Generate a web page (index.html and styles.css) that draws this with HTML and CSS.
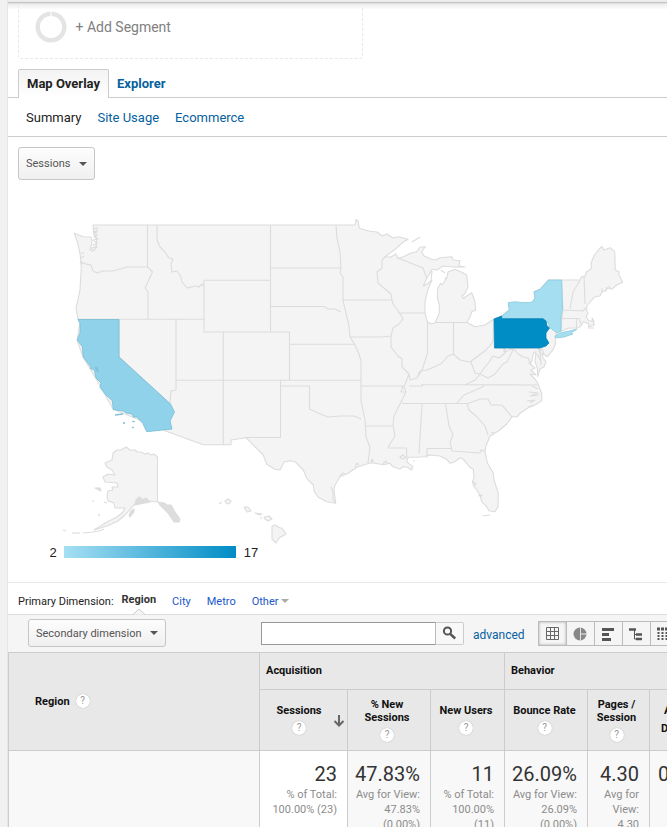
FILE: index.html
```html
<!DOCTYPE html>
<html lang="en">
<head>
<meta charset="utf-8">
<title>Map Overlay</title>
<link rel="stylesheet" href="styles.css">
</head>
<body>
<main class="report">
  <div class="topbar"></div>
  <section class="segment">
    <svg class="ring" width="32" height="32" viewBox="0 0 32 32"><circle cx="16" cy="16" r="13.3" fill="none" stroke="#e4e4e4" stroke-width="4.4"/><path d="M16 0v6" stroke="#fff"/></svg>
    <span>+ Add Segment</span>
  </section>
  <nav class="tabs"><a class="tab active">Map Overlay</a><a class="tab">Explorer</a></nav>
  <nav class="subtabs"><a class="current">Summary</a><a>Site Usage</a><a>Ecommerce</a></nav>
  <div class="metric"><button class="drop">Sessions<i class="caret"></i></button></div>
  <section class="map">
    <svg width="659" height="360" viewBox="8 190 659 360">
      <g fill="#f4f4f4" stroke="#dcdcdc" stroke-width="1.1" stroke-linejoin="round">
        <path d="M93 225H355L356 219.500 358 220.500 359.300 228.300 365 230 370 231.300 377 232 382 236 387 234 393 238 398 236.700 408 239.300 402 243 395 249.300 385 256.700 391 257 396 254 398 258.500 405 256 411 253 416.700 251.700 420 247.300 425.300 246.700 421.700 251.700 424 256 431.700 259.300 436 260 440 257.700 451.700 256.700 453.300 260 460 260.700 459 266 465 267 455 267 443 266 437 270 432 269.300 429 275 426.700 278.300 423.300 286 427 284 432 280 428.300 288.300 425 301.700V313.300L427.300 321.700 431 324 435 322.700 439.300 313.300V305L437.300 297.300 437.700 288.300 440.700 283.300 442 285 446.700 278.300 448 272 455 269.300 462.700 272.700 466.700 275 468 286.700 465 293.300 462 296 463.300 298.500 466.700 296 471.700 292.700 475 301.700 475.700 310 471.700 311.700 470 317.300 466.700 322.300 475 326.700 485 325 494.300 318.700 501.700 316 509.300 310 508.300 302.700 523.300 302.700 531.700 302.300 535 298.300 534 291.700 540 289.300 548.300 280H579.700L581.700 276.700 585 276 586.700 271.700 591.700 268.300 591 263.300 594.300 255 601.700 246.300 604 250 610 247.700 614.700 251.700 615.300 270 619 271.700 619 275 622.700 282.300 616.700 285 611.700 289.300 608 288 605 291 602 292 600 296 595 296.700 591.700 300 586.700 306V311L588 313 586 317 589 321 594 321 592 318 594.300 325 588.300 327 589 324 583.300 321.700 581.700 325 578.300 327.700 568.300 328.300 560 331.700 556.700 332.700 555 337 555.700 343.300 553.300 349.300 547.300 356.700 542 353 543 358 546 361.700 544 366.700 540 369 537.700 376.700 537.300 368.300 535 361.700 536 351.700 533.300 353.300 531.700 361.700 529 363 535 368 531 370 536 375 530 374 535 379 537.700 383.300 541.700 393.300V400.700L535 405 528.300 407.700 520 413.300 517.300 416.700H512.300L506.700 424 498.300 431 490 436 485.700 446.700 485 451.700 487.300 462.700 493.300 473.300 494 480 498.300 493.300 498 506.700 495 511.700 489 510.700 486.700 506.700 481.700 501.700 480 495 474 486 472.300 481.700 474 478 473.300 469.300 470 467.300 463.300 459.300 460 457.700 455 461.700 450 463.300 446.700 459.300 440 456 430 455 423.300 456.700 416.700 457.300 408.300 457.300 406.700 461.700 412.700 466.700 411.700 470 407 467 403.300 466.700 400 469 392.700 466.700 390 463.300 383.300 464.700 371.700 462.700 366.700 464 356.700 467.300 348.300 473.300 340 476.700 335 485 334 490 335.700 503.300 326.700 501.700 318.300 497.300 314.300 491.700 313.300 485 306.700 478.300 303.300 470 295 461.700 290 460.700 284 462 280 470 275 469.300 266.700 464.300 263.300 455 246 437.700 231 440V444.700H203.300L168.300 432 113 409 95 377 83 357 77 340 80 323 78 319.300 76 308.300 80 290 81.300 266.700 80 253.300 77.300 241.700 74.300 233.300 83.300 236.700 91 237 92 242 90 250 93 251 96 248 97 238 94 235Z"/>
        <path fill="none" d="M147.500 225V267M81 262 86 264 91 265 93 271 97 273 103 271 113 271 127 267H147.500L152.500 272 145 288 148 292V319M78 319.300H204V280.300H270.500M157 225V240L160 247 164 251 169 258 173 259 171 264 172 272 177 271 181 277 182 282 187 288 195 286 199 287 202 284 204 287V332H270.500M270.500 225V332M119 319.300V357L170 404 171 391 176 390V319.300M223.300 332V444.700M176 380.300H361M336 225 337 238 340 252 341 268H270.500M341 268 340 273 343 277V300L345 309 349 326 350 337 355 345 359 354 361 361V401L365 420 366 437 370 447 368 463M343 300H392L393 304 401 315 403 319 399 324 393 328 391 336 381 337H350M270.500 306.500H324L328 309 335 309 341 312M270.500 332H289.500V380M289.500 344.300H355M385 257 382 260 382 268 377 272 378 283 391 294 392 300M398 258 423 268 427 279M398 313H425M427.500 322V353L425 361 422 370 417 378M391 336 391 347 398 356 402 359 402 367 409 374 410 380 417 378 420 371 427 370 434 367 442 363 448 356 453.500 354V322.500M435 322.500H467M453.500 354 460 360 470 362 478 356 486 350 493 342 494 319M505 347 505 353 499 358 493 356 489 362 485 367 480 374 475 373 471 362M480 374 475 380 465 385M480 374 488 378 495 374 503 364 507 362 513 350M505 352 511 349 515 350 518 354 523 357 528 358 532 366M494 348H540L541 365M504 348V352M538 348 541 356M541 348 544 353M422 384 422.500 386H409M422 384.500 537.500 385M402 403.500H468L480 399 488 399 491 405 502 405 512 417M457 403 464 395 478 389 484 386M409 374 404 387 406 392 400 404 394 416 393 425 395 436 390 444 388 448H406.500L407 458M280.500 380V437.500H246M280.500 386H309.500V409L318 413 328 417 340 416 354 416 361 419M361 386H403L401 392H405M366 426H393M422 404 419 454M445.500 404 449 426 453 435 450 442 451.500 448 452 451 480 453 481 450 485 451.500M427 458 427 448.500H451.500M467 404 469 410 476 416 485 426 488 435M561.500 280 563 309 562 318 561 331M563 310 583 311 586 308M561 318.500H579L581 324M576.500 319V328M570 309 573 292 579 282 580 280M584 276 585 304"/>
        <path d="M157.500 457 154 454 151 455 148 453 145 454 141 452 137 452 135 450 130 450 126 447 121 450 117 450 113 453 112 460 105 463 107 467 112 470 115 475 108 474 103 477 105 482 117 483 118 487 112 487 113 490 108 491 107 496 108 501 114 503 115 508 125 508 123 512 117 517 107 522 94 530 107 526 118 521 126 514 132 507 137 502 143 499 148 501 157.500 502Z"/>
        <path fill="#ddd" d="M158 502 164 503 167 505 171 505 175 512 180 519 179 522 174 522 168 513 160 505ZM136 500 139 497 141 498 140 501 146 498 150 502 140 504 135 505ZM129 515 131 511 134 509 134 512 130 517ZM95 488 100 488 101 491 97 489Z"/>
        <path d="M225 501 228 499 231 501 230 503 227 504ZM244 507 248 507 251 511 247 512ZM255 513 262 514 260 515ZM264 517 269 516 272 519 268 521 265 519ZM272 526 275 525 280 528 282 528 286 534 279 538 276 543 272 539Z"/>
        <path fill="none" d="M63 530l3 1M72 533l5 0 3 0M83 533l10-1M93 532l6-1 5-2M92 501l2 0M219 504l3-2M260 518l2 0M98 514l2 2M104 502l3 1M412 242l8-5M93 229l4-1 0 4-4-1 4 4-3 2 4 2-5 1 4 3-4 2 4 2-6 1 3 2M81 253l3 0M81 258l3-2M80 262l3 2M431 281l1-10M441 270l4 3M445 280l1-3M400 457l3-2 3 3-4 1ZM340 476l3-3 2 1M355 467l2-4 2 2M371 463l1-4 2 4M383 464l3-3 2 3M331 487l2 5 0 8 3 3M529 392l9 1-8 3 9-1M532 386l6 3M527 401l8-1-5 3M528 407l6-2M473 482l3 2-3 2M478 496l4-1-2 3M491 432l3 1M483 516l7-1M413 461h2M594 328l-6 0M537 354l4 7M602 292l0-4M606 291l1-4M610 289l-1-3"/>
      </g>
      <path fill="#90d2ea" stroke="#75bdd7" stroke-width=".8" d="M78 319.500H119V357L170.500 404 174.500 412 170 421 172 429 146.700 431.700 142.700 423.300 137 417 133.300 417 132 414 126 413 123.300 411 113.300 409.700 112.300 400.700 106 395 100 387.300 101 383 96 378 94.300 370 90.700 368.700 90.700 366.700 83.300 357.300 82.300 346.700 77.300 340 80 333 80 323Z"/>
      <path fill="none" stroke="#82bfd5" stroke-width="1.300" d="M115 415l8-1M123 423h2M132 421l3 1M132 427l2 1M95 367l3 5-1-5"/>
      <path fill="#a5def1" stroke="#8bcbe0" stroke-width=".8" d="M501.700 316 509.300 310 508.300 302.700 515 301.700 523.300 302.700 531.700 302.300 535 298.300 534 291.700 540 289.300 548.300 280H561.700L562.500 308 561 317V331L557 333 549 327 549 324 543 318.700H501.700ZM555 336 560 333 569 331 577 329 571 333 573 334 564 337 556 338Z"/>
      <path fill="#008cc5" stroke="#007eb5" stroke-width=".7" d="M494 319 501.700 316V318.700H543L546 321 547 326 549.500 328 546 333 546 338 549 343 546 346 540 348H494.500Z"/>
    </svg>
    <div class="legend"><span>2</span><i class="scale"></i><span>17</span></div>
  </section>
  <section class="dimensions">
    <span>Primary Dimension:</span><b>Region</b><a>City</a><a>Metro</a><a>Other<i class="caret soft"></i></a>
    <svg class="pointer" width="12" height="7" viewBox="0 0 12 7"><path d="M0 6.500 6 1l6 5.500" fill="#f5f5f5" stroke="#c8c8c8"/></svg>
  </section>
  <section class="toolbar">
    <button class="drop secondary">Secondary dimension<i class="caret"></i></button>
    <div class="search"></div>
    <button class="find"><svg width="15" height="15" viewBox="0 0 15 15" fill="none" stroke="#555"><circle cx="5.500" cy="5" r="3.600" stroke-width="2"/><path d="m8.200 7.800 5 4.700" stroke-width="2.500"/></svg></button>
    <a class="advanced">advanced</a>
    <div class="views">
      <span class="on"><svg width="14" height="14" viewBox="0 0 14 14"><path d="M.5.5h12v12H.5zM4.500.5v12M8.500.5v12M.5 4.500h12M.5 8.500h12" fill="none" stroke="#666"/></svg></span>
      <span><svg width="14" height="14" viewBox="0 0 14 14"><circle cx="7" cy="7" r="6.500" fill="#888"/><path d="M7.500 0v14" stroke="#e2e2e2"/><path d="M7.500 7H14" stroke="#eee"/></svg></span>
      <span><svg width="14" height="14" viewBox="0 0 14 14"><path d="M1 2.500h12M1 7.500h7M1 12.500h9" stroke="#555" stroke-width="3"/></svg></span>
      <span><svg width="14" height="14" viewBox="0 0 14 14"><path d="M0 2.500h7M7 7.500h6M7 12h6" stroke="#555" stroke-width="2.600"/><path d="M5.500 2.500v9.500H9M5.500 7.500H9" fill="none" stroke="#555"/></svg></span>
      <span><svg width="14" height="14" viewBox="0 0 14 14"><path d="M0 2h14" stroke="#555" stroke-width="3" stroke-dasharray="3 1"/><path d="M1.500 5v8M5.500 5v8M9.500 5v8" stroke="#555" stroke-width="2" stroke-dasharray="2 1"/></svg></span>
    </div>
  </section>
  <section class="table">
    <div class="region"><b>Region</b><i class="help">?</i></div>
    <div class="group acquisition">Acquisition</div>
    <div class="group behavior">Behavior</div>
    <div class="head">Sessions<i class="help">?</i><svg class="sort" width="12" height="14" viewBox="0 0 12 14"><path d="M6 1v10M1.500 7 6 11.500 10.500 7" fill="none" stroke="#666" stroke-width="2"/></svg></div>
    <div class="head two">% New<br>Sessions<i class="help">?</i></div>
    <div class="head">New Users<i class="help">?</i></div>
    <div class="head">Bounce Rate<i class="help">?</i></div>
    <div class="head two">Pages /<br>Session<i class="help">?</i></div>
    <div class="head edge"><span>Avg.</span><span>Duration</span></div>
    <div class="cell blank"></div>
    <div class="cell sorted"><strong>23</strong>% of Total:<br>100.00% (23)</div>
    <div class="cell"><strong>47.83%</strong>Avg for View:<br>47.83%<br>(0.00%)</div>
    <div class="cell"><strong>11</strong>% of Total:<br>100.00%<br>(11)</div>
    <div class="cell"><strong>26.09%</strong>Avg for View:<br>26.09%<br>(0.00%)</div>
    <div class="cell"><strong>4.30</strong>Avg for<br>View:<br>4.30</div>
    <div class="cell last"><strong>00:02</strong></div>
  </section>
</main>
</body>
</html>
```
FILE: styles.css
```css
* { box-sizing: border-box; }
html, body { margin: 0; width: 667px; height: 827px; overflow: hidden; }
body { background: #f1f1f1; font-family: Roboto, "Liberation Sans", sans-serif; font-size: 11px; color: #222; }
svg { display: block; }
a { color: #05619f; }
i { font-style: normal; }
button { font-family: inherit; padding: 0; }
.report { width: 660px; height: 827px; margin-left: 7px; border-left: 1px solid #e5e5e5; background: #fff; overflow: hidden; }
.topbar { height: 9px; margin-left: -8px; position: relative; border-top: 1px solid #eee; background: linear-gradient(#e8e8e8 0 1px, #c8c8c8 1px 2px, #dedede 2px 3px, #eee 3px, #fff0 9px); }
.segment { width: 345px; height: 55px; margin: -5px 0 0 10px; border: 1px dashed #e8e8e8; border-top: 0; border-radius: 3px; display: flex; align-items: center; padding: 0 0 8px 16px; gap: 9px; color: #808080; }
.ring { margin: 0 0 0 -0.5px; }
.segment span { font-size: 14px; margin-top: -1px; }
.tabs { display: flex; height: 29px; margin-top: 10px; padding-left: 10px; border-bottom: 1px solid #ccc; font-size: 13px; font-weight: 700; line-height: 29px; }
.tab { padding: 0 8px; }
.active { height: 29px; line-height: 27px; border: 1px solid #ccc; border-bottom: 0; background: linear-gradient(#f3f3f3, #fff); color: #222; border-radius: 2px 2px 0 0; }
.subtabs { height: 39px; border-bottom: 1px solid #ccc; padding-left: 18px; display: flex; gap: 16px; align-items: center; font-size: 13px; }
.subtabs .current { color: #222; }
.metric { padding: 10px; height: 53px; }
.drop { display: flex; flex: none; align-items: center; justify-content: space-between; width: 77px; height: 33px; padding: 0 7px; border: 1px solid #c6c6c6; border-radius: 3px; background: linear-gradient(#fdfdfd, #f0f0f0); color: #555; font-size: 11px; }
.caret { border: 4px solid transparent; border-top-color: #555; border-bottom: 0; }
.soft { display: inline-block; border-top-color: #aaa; margin: 0 0 2px 3px; }
.map { height: 393px; border-bottom: 1px solid #e8e8e8; }
.legend { display: flex; align-items: center; gap: 8px; height: 14px; margin-top: -5px; padding-left: 41.500px; font: 13px "Liberation Sans", sans-serif; }
.scale { width: 172px; height: 12px; margin-left: -0.5px; background: linear-gradient(90deg, #a6dff3, #008cc5); }
.legend span:last-child { margin-left: -0.5px; }
.dimensions { height: 32px; border-bottom: 1px solid #ddd; padding: 11px 0 0 10px; display: flex; position: relative; line-height: 15px; }
.dimensions b { margin: -2px 16px 0 8px; color: #333; }
.dimensions a { color: #2258cc; margin-right: 16px; }
.pointer { position: absolute; left: 125px; bottom: -1px; }
.toolbar { height: 37px; background: #f5f5f5; display: flex; align-items: flex-start; padding: 4px 0 0 20px; }
.secondary { width: 138px; height: 28px; margin-right: 95px; }
.search { width: 175px; flex: none; height: 23px; margin-top: 3px; border: 1px solid #999; border-right-color: #bbb; background: #fff; }
.find { width: 28px; flex: none; height: 23px; margin-top: 3px; display: grid; place-items: center; border: 1px solid #ccc; border-left: 0; background: #f8f8f8; border-radius: 0 2px 2px 0; }
.advanced { font-size: 12px; flex: none; width: 65px; margin: 9px 0 0 9px; line-height: 14px; }
.views { display: flex; flex: none; margin-top: 2px; }
.views span { width: 28px; height: 25px; flex: none; border: 1px solid #bbb; border-left: 0; display: grid; place-items: center; padding-right: 1px; }
.views .on { width: 29px; border-left: 1px solid #bbb; box-shadow: inset 0 0 3px #aaa; padding: 0; }
.table { width: 724px; border-left: 1px solid #ccc; border-top: 1px solid #ccc; display: grid; grid-template-columns: 250px 88px 83px 74px 83px 62px 83px; grid-template-rows: 37px 61px 80px; color: #111; }
.region { grid-row: 1 / 3; background: #e8e8e8; border-bottom: 1px solid #ccc; display: flex; align-items: center; gap: 6px; padding: 0 0 1px 26px; }
.group { background: #e8e8e8; border-left: 1px solid #ccc; border-bottom: 1px solid #ccc; font-weight: 700; line-height: 36px; padding-left: 6px; }
.acquisition { grid-column: 2 / 5; }
.behavior { grid-column: 5 / 8; }
.head { background: #e8e8e8; border-left: 1px solid #ccc; border-bottom: 1px solid #ccc; font-weight: 700; line-height: 13px; text-align: center; display: flex; flex-direction: column; align-items: center; justify-content: center; position: relative; padding: 0 3px 2px 0; }
.head:nth-child(4) { padding-right: 9px; }
.two { padding: 0 4px 0 0; }
.help { width: 14px; height: 14px; border-radius: 7px; background: #fff; box-shadow: 0 0 1px #999; color: #999; font-size: 10px; font-weight: 400; line-height: 14px; text-align: center; }
.head .help { margin-top: 4px; }
.sort { position: absolute; right: 2px; top: 24px; }
.edge { align-items: flex-start; padding: 0 0 0 14px; line-height: 18px; }
.edge span:last-child { margin-left: -3px; }
.cell { border-left: 1px solid #ccc; background: #f8f8f8; color: #8c8c8c; padding: 11px 10px 0 0; text-align: right; line-height: 15px; white-space: nowrap; }
.cell strong { display: block; font-size: 20px; line-height: 25px; font-weight: 400; color: #333; }
.blank { border-left: 0; }
.sorted { background: #fff; }
.last { text-align: left; padding-left: 8px; }
```
